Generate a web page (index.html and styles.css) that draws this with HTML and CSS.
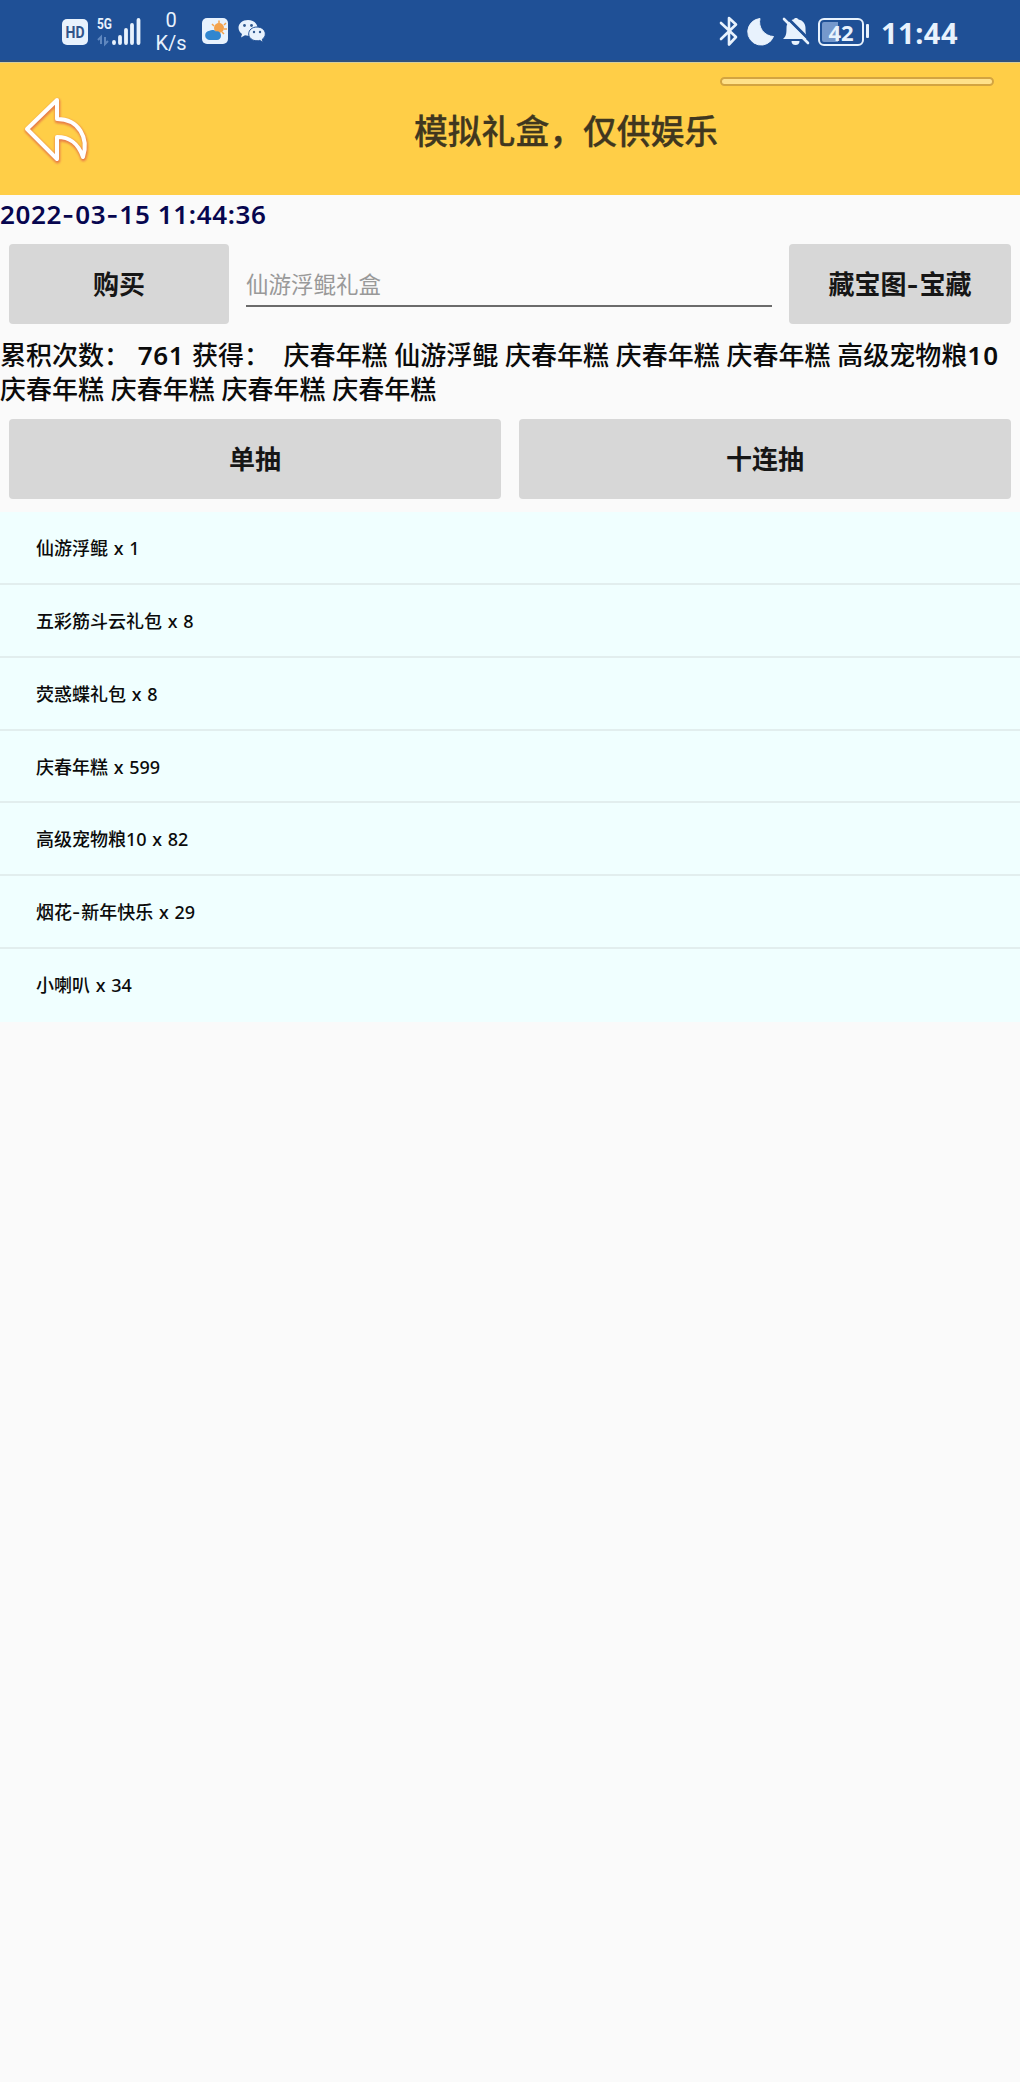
FILE: index.html
```
<!DOCTYPE html>
<html lang="zh-CN">
<head>
<meta charset="utf-8">
<title>模拟礼盒</title>
<link rel="stylesheet" href="styles.css">
</head>
<body>
<div class="status">
  <svg class="status-icons" width="97" height="62" viewBox="0 0 97 62">
    <rect x="12" y="19" width="26" height="26" rx="5" fill="#e8f2fd"/>
    <text x="25" y="38" class="hd" text-anchor="middle" textLength="19" lengthAdjust="spacingAndGlyphs">HD</text>
    <text x="47" y="29" class="net" textLength="15" lengthAdjust="spacingAndGlyphs">5G</text>
    <path d="M51 44V37l-3 3M55 37v7l3-3" fill="none" stroke="#5f87bf" stroke-width="2"/>
    <path d="M64 43v-1M70 43v-6M76 43v-13M82 43v-18M88.500 43V20" fill="none" stroke="#e8f2fd" stroke-width="3.800" stroke-linecap="round"/>
  </svg>
  <div class="speed"><span>0</span><span>K/s</span></div>
  <svg class="status-apps" width="72" height="62" viewBox="0 0 72 62">
    <rect x="7" y="18" width="26" height="26" rx="5" fill="#e8f2fd"/>
    <circle cx="24" cy="28" r="5" fill="#f3a24c"/>
    <path d="M24 20.500v3M17 24l2 2M31 23l-2 2M32 29h-3M29 34l-2-2" stroke="#f3a24c" stroke-width="1.500"/>
    <path d="M15 40a4.600 4.600 0 0 1-.5-9.200c2-1.200 4.500-1.200 6.500.7 2.500-.8 5 1.200 5 4.200 0 2.500-1.800 4.300-4 4.300z" fill="#3186cf"/>
    <path d="M53 20c-5.500 0-9.500 3.500-9.500 7.800 0 2.600 1.400 4.700 3.500 6.100l-1 3.600 4-2.200c1 .3 2 .4 3 .4 5.500 0 9.500-3.500 9.500-7.900S58.500 20 53 20z" fill="#e8f2fd"/>
    <path d="M62 27c-4.800 0-8.300 3-8.300 6.900s3.500 6.900 8.300 6.900c1 0 2-.2 2.800-.4l3.400 1.900-.9-3.100c1.900-1.200 3-3.100 3-5.300 0-3.900-3.500-6.900-8.300-6.900z" fill="#e8f2fd" stroke="#1f5096" stroke-width="1"/>
    <g fill="#315a90"><circle cx="49.500" cy="25.500" r="1.400"/><circle cx="56.500" cy="25.500" r="1.400"/><circle cx="59" cy="32" r="1.200"/><circle cx="65" cy="32" r="1.200"/></g>
  </svg>
  <svg class="status-right" width="110" height="62" viewBox="0 0 110 62">
    <path d="M11 23l15 14-7 7.500V18l7 6.500L11 39" fill="none" stroke="#e8f2fd" stroke-width="2.600" stroke-linejoin="round" stroke-linecap="round"/>
    <path d="M50 18.500a13.300 13.300 0 1 0 13.500 18A14.500 14.500 0 0 1 50 18.500z" fill="#e8f2fd" stroke="#e8f2fd" stroke-linejoin="round"/>
    <path d="M73 39c3-2.500 3.500-5 3.500-11 0-4.500 3-8 7-8.500 1-2 4-2 5 0 4.500.8 7 4.300 7 8.500 0 6 .5 8.500 3.500 11z" fill="#e8f2fd"/>
    <path d="M81.500 41h8a4 4 0 0 1-8 0z" fill="#e8f2fd"/>
    <path d="M76.500 17l24 24" stroke="#1f5096" stroke-width="3"/>
    <path d="M74 19l24 24" stroke="#e8f2fd" stroke-width="2.600" stroke-linecap="round"/>
  </svg>
  <div class="battery"><span>42</span></div>
  <div class="clock">11:44</div>
</div>
<header class="header">
  <svg class="back" width="90" height="133" viewBox="0 0 90 133">
    <path class="back-shadow" d="M57 37L27 66l30 30V74c13 0 21 6 26 20 6-19-4-38-26-38z"/>
    <path class="back-line" d="M57 37L27 66l30 30V74c13 0 21 6 26 20 6-19-4-38-26-38z"/>
  </svg>
  <h1 class="title">模拟礼盒，仅供娱乐</h1>
  <div class="handle"></div>
</header>
<main>
  <div class="date">2022<span class="dash">-</span>03<span class="dash">-</span>15 11:44:36</div>
  <div class="row buy-row">
    <button class="btn side">购买</button>
    <div class="field">仙游浮鲲礼盒</div>
    <button class="btn side right">藏宝图<span class="dash">-</span>宝藏</button>
  </div>
  <div class="result">
    <div>累积次数： <span class="count">761</span> 获得：&nbsp; 庆春年糕 仙游浮鲲 庆春年糕 庆春年糕 庆春年糕 高级宠物粮<span class="ten">10</span></div>
    <div>庆春年糕 庆春年糕 庆春年糕 庆春年糕</div>
  </div>
  <div class="row draw-row">
    <button class="btn">单抽</button>
    <button class="btn">十连抽</button>
  </div>
  <ul class="list">
    <li>仙游浮鲲 x 1</li>
    <li>五彩筋斗云礼包 x 8</li>
    <li>荧惑蝶礼包 x 8</li>
    <li>庆春年糕 x 599</li>
    <li>高级宠物粮10 x 82</li>
    <li>烟花<span class="dash">-</span>新年快乐 x 29</li>
    <li>小喇叭 x 34</li>
  </ul>
</main>
</body>
</html>
```
FILE: styles.css
```
* { box-sizing: border-box; }
body {
  margin: 0;
  min-height: 2082px;
  background: #fafafa;
  color: #0b0b0b;
  font-family: "Noto Sans", "Noto Sans CJK SC", sans-serif;
  font-weight: 500;
}
svg { display: block; flex: none; }
.status {
  height: 62px;
  padding-left: 50px;
  display: flex;
  background: linear-gradient(#1f5096 60px, #31527c 60px);
  color: #e8f2fd;
}
.hd { font: bold 16px Roboto, sans-serif; fill: #31548a; }
.net { font: bold 14px Roboto, sans-serif; fill: #e8f2fd; }
.speed {
  width: 48px;
  padding-top: 9px;
  display: flex;
  flex-direction: column;
  align-items: center;
  font: 20px/23px Roboto, sans-serif;
}
.status-right { margin-left: 443px; }
.battery {
  position: relative;
  width: 46px;
  height: 28px;
  margin: 18px 0 0 -2px;
  border: 2.500px solid #e8f2fd;
  border-radius: 6px;
  display: flex;
  align-items: center;
  justify-content: center;
  background: linear-gradient(90deg, #7598cc 42%, transparent 42%) content-box;
  padding: 2px;
  font: 700 22px "Noto Sans", sans-serif;
}
.battery::after {
  content: "";
  position: absolute;
  left: 46px;
  top: 4px;
  width: 3px;
  height: 14px;
  border-radius: 1px;
  background: #e8f2fd;
}
.clock { margin-left: 17px; font: 700 29px/65px "Noto Sans", sans-serif; letter-spacing: .5px; }
.header {
  position: relative;
  height: 133px;
  display: flex;
  align-items: center;
  background: #ffce47;
  border-top: 1px solid #d8cf9a;
}
.back-line { fill: none; stroke: #fff; stroke-width: 4; stroke-linejoin: round; }
.back-shadow { fill: none; stroke: #e36e47; stroke-width: 5.500; stroke-linejoin: round; transform: translate(.5px, 1.500px); opacity: .85; filter: blur(1px); }
.title { margin: 3px 0 0 324px; font-size: 33.800px; line-height: 50px; font-weight: 500; color: #40371f; -webkit-text-stroke: .3px #40371f; white-space: nowrap; }
.handle {
  position: absolute;
  left: 720px;
  top: 14px;
  width: 274px;
  height: 9px;
  border: 2px solid #d3a441;
  border-radius: 5px;
  background: #ffe18a;
}
.date { height: 40px; line-height: 39px; font-size: 26px; font-weight: 600; letter-spacing: .65px; color: #07064f; white-space: nowrap; }
.dash { font-family: Inter, sans-serif; line-height: 1; letter-spacing: 1px; }
.row { display: flex; }
.buy-row { padding: 9px 9px 0; height: 88px; }
.btn {
  flex: 1;
  height: 80px;
  padding: 0 0 2px;
  border: 0;
  border-radius: 4px;
  background: #d7d7d7;
  color: #161616;
  font: bold 26px "Noto Sans", "Noto Sans CJK SC", sans-serif;
}
.side { flex: 0 0 220px; }
.right { flex-basis: 222px; }
.field {
  flex: 1;
  height: 63px;
  margin: 0 17px;
  border-bottom: 2px solid #6b6b6b;
  font-size: 22.500px;
  line-height: 82px;
  font-weight: 400;
  color: #999;
}
.result { height: 96px; padding-top: 15px; font-size: 26px; line-height: 34px; white-space: nowrap; }
.count { margin: 0 1px; letter-spacing: .6px; font-weight: 600; }
.ten { letter-spacing: 1px; font-weight: 600; }
.draw-row { padding: 0 9px; gap: 18px; height: 93px; }
.list { list-style: none; margin: 0; padding: 0; background: #f0ffff; font-size: 18px; word-spacing: 1px; }
.list li { height: 72.850px; padding-left: 36px; line-height: 72px; border-bottom: 2px solid #e2eeee; }
.list li:last-child { border-bottom: 0; }
```
